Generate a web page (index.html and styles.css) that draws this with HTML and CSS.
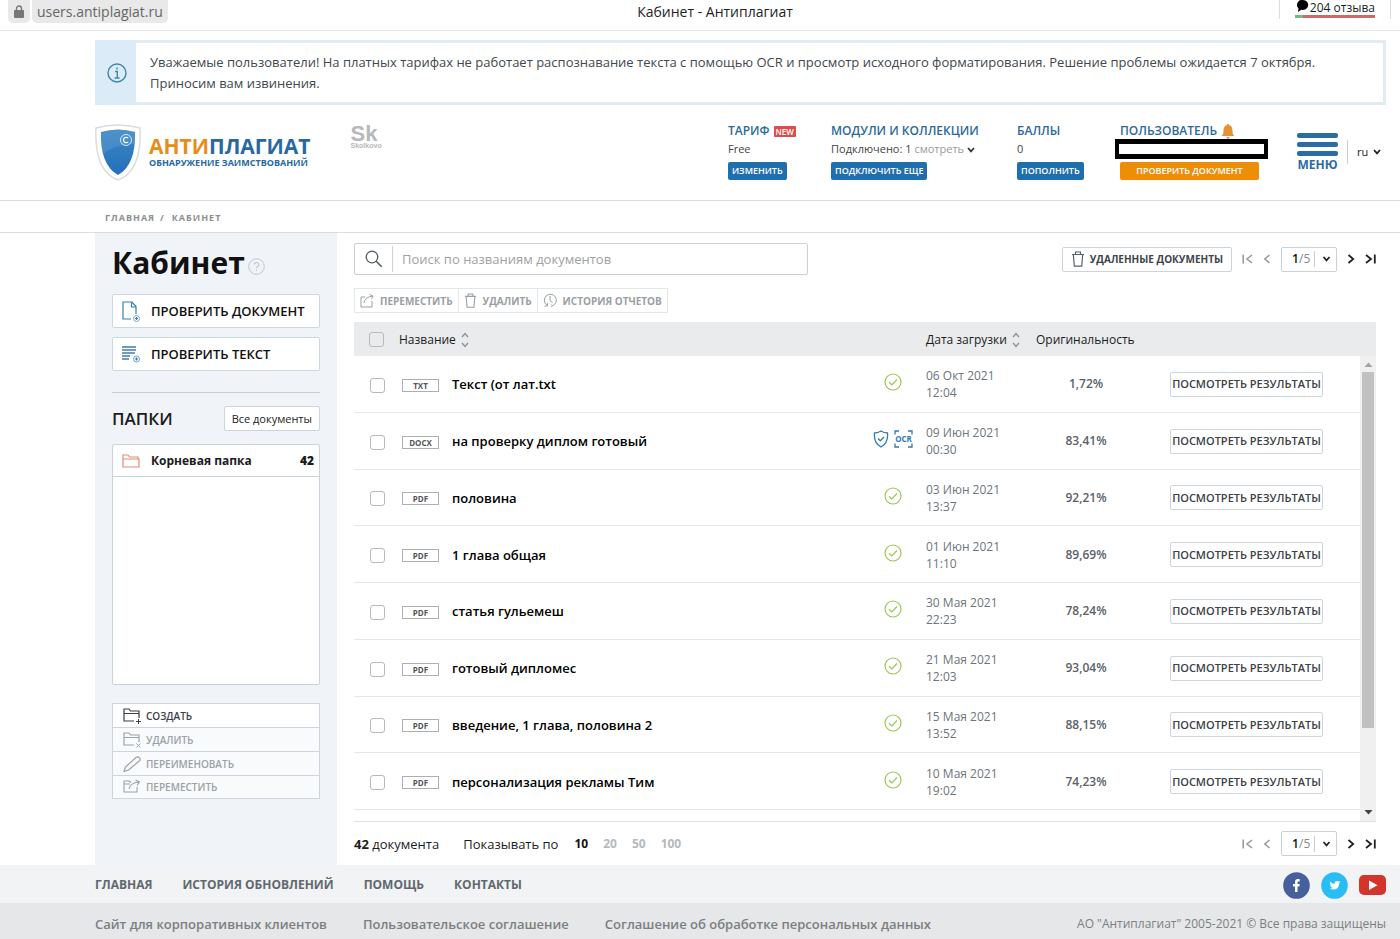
FILE: index.html
```html
<!DOCTYPE html>
<html lang="ru">
<head>
<meta charset="utf-8">
<meta name="viewport" content="width=device-width, initial-scale=1">
<title>Кабинет - Антиплагиат</title>
<link rel="stylesheet" href="styles.css">
</head>
<body>
<svg class="sprite" aria-hidden="true">
  <symbol id="chev" viewBox="0 0 8 6"><path d="M1 1l3 3.4L7 1" fill="none" stroke="currentColor" stroke-width="1.7"/></symbol>
  <symbol id="sort" viewBox="0 0 8 16"><path d="M1 5l3-3.5L7 5M1 11l3 3.5L7 11" fill="none" stroke="#8d9499" stroke-width="1.4"/></symbol>
  <symbol id="prev" viewBox="0 0 8 10"><path d="M6.5 1L1.8 5l4.700 4" fill="none" stroke="currentColor" stroke-width="1.500"/></symbol>
  <symbol id="next" viewBox="0 0 8 10"><path d="M1.500 1l4.700 4-4.700 4" fill="none" stroke="currentColor" stroke-width="1.800"/></symbol>
  <symbol id="first" viewBox="0 0 11 10"><path d="M1.200 0.500v9M10 1L5 5l5 4" fill="none" stroke="currentColor" stroke-width="1.500"/></symbol>
  <symbol id="last" viewBox="0 0 11 10"><path d="M9.800 0.500v9M1 1l5 4-5 4" fill="none" stroke="currentColor" stroke-width="1.800"/></symbol>
  <symbol id="ok" viewBox="0 0 18 18"><circle cx="9" cy="9" r="8" fill="none" stroke="#9cc653" stroke-width="1.200"/><path d="M5 9.200l2.800 2.700L13 6.500" fill="none" stroke="#9cc653" stroke-width="1.200"/></symbol>
  <symbol id="trash" viewBox="0 0 14 16"><path d="M1 3.500h12M4.500 3.300V1h5v2.300M2.300 3.500l1 11.700h7.400l1-11.700" fill="none" stroke="currentColor" stroke-width="1.200"/></symbol>
  <symbol id="folder" viewBox="0 0 20 16"><path d="M11 13H1V1h5l1.500 2H16v7M1 5.500h15" fill="none" stroke="currentColor" stroke-width="1.200"/></symbol>
</svg>

<div class="browser">
  <div class="address"><span class="lock"><svg width="10" height="13" viewBox="0 0 10 13"><path d="M2.500 6V3.500a2.500 2.500 0 0 1 5 0V6" fill="none" stroke="#777" stroke-width="1.400"/><rect y="5" width="10" height="8" rx="1" fill="#777"/></svg></span><span class="url">users.antiplagiat.ru</span></div>
  <div class="tab-title">Кабинет - Антиплагиат</div>
  <a class="reviews" href="#"><span class="reviews-text"><svg width="12" height="12" viewBox="0 0 12 12"><path d="M6 0a5.500 5 0 1 1-1.800 9.800L1 12l.5-3.600A5 5 0 0 1 6 0z"/></svg>204 отзыва</span><span class="rating"></span></a>
</div>

<div class="notice" role="status">
  <div class="notice-icon"><svg width="20" height="20" viewBox="0 0 20 20" fill="none" stroke="#3d87ab" stroke-width="1.400"><circle cx="10" cy="10" r="9"/><path d="M8 8.500h2.300V15M7.500 15h5M10 4.500v2"/></svg></div>
  <p>Уважаемые пользователи! На платных тарифах не работает распознавание текста с помощью OCR и просмотр исходного форматирования. Решение проблемы ожидается 7 октября.<br>Приносим вам извинения.</p>
</div>

<header class="header">
  <a class="logo" href="#">
    <svg width="46" height="57" viewBox="0 0 46 57"><defs><linearGradient id="sg" x1="0" y1="0" x2="0" y2="1"><stop offset="0" stop-color="#3e87c2"/><stop offset="1" stop-color="#2270bb"/></linearGradient></defs><path d="M1 4Q23-2 45 4Q47 47 23 56Q-1 47 1 4z" fill="#fff" stroke="#d7dde3" stroke-width="1.500"/><path d="M6 8Q23 3 40 8Q41 41 23 51Q5 41 6 8z" fill="url(#sg)"/><path d="M6 9Q23 3 40 8V20Q20 20 8 30Q6 22 6 9z" fill="#69a5d4" opacity=".35"/><circle cx="31" cy="16" r="5.500" fill="none" stroke="#d5e9f8"/><path d="M33.200 14.200a2.700 2.700 0 1 0 0 3.600" fill="none" stroke="#fff" stroke-width="1.200"/></svg>
    <span class="logo-text"><span class="logo-name"><span class="orange">АНТИ</span>ПЛАГИАТ</span><span class="logo-sub">ОБНАРУЖЕНИЕ ЗАИМСТВОВАНИЙ</span></span>
  </a>
  <a class="sk" href="#"><span class="sk-big">Sk</span><span class="sk-small">Skolkovo</span></a>
  <div class="account">
    <div class="acc"><span class="acc-title">ТАРИФ <span class="new">NEW</span></span><span class="acc-value">Free</span><button class="btn-blue">ИЗМЕНИТЬ</button></div>
    <div class="acc"><span class="acc-title">МОДУЛИ И КОЛЛЕКЦИИ</span><span class="acc-value">Подключено: 1 <a href="#">смотреть <svg width="8" height="6"><use href="#chev"/></svg></a></span><button class="btn-blue">ПОДКЛЮЧИТЬ ЕЩЕ</button></div>
    <div class="acc"><span class="acc-title">БАЛЛЫ</span><span class="acc-value">0</span><button class="btn-blue">ПОПОЛНИТЬ</button></div>
    <div class="acc user"><span class="acc-title">ПОЛЬЗОВАТЕЛЬ <svg width="14" height="15" viewBox="0 0 14 15"><path d="M7 0a1.200 1.200 0 0 1 1.200 1.300C11 2 11.500 4.500 11.500 7c0 3 .5 3.500 2 5H.5c1.500-1.500 2-2 2-5 0-2.500.5-5 3.300-5.700A1.200 1.200 0 0 1 7 0zM5.300 13h3.400A1.700 1.700 0 0 1 5.300 13z" fill="#e69138"/></svg></span><span class="acc-value"></span><button class="btn-orange">ПРОВЕРИТЬ ДОКУМЕНТ</button><span class="user-mask"></span></div>
  </div>
  <button class="menu"><span class="bar"></span><span class="bar"></span><span class="bar"></span>МЕНЮ</button>
  <label class="lang"><select aria-label="Язык"><option>ru</option></select><svg width="8" height="6"><use href="#chev"/></svg></label>
</header>

<nav class="crumbs"><a href="#">ГЛАВНАЯ</a><span>/</span><a href="#">КАБИНЕТ</a></nav>

<div class="page">
  <aside class="side">
    <h1>Кабинет<svg width="17" height="17" viewBox="0 0 17 17" fill="none" stroke="#c0c6ca"><circle cx="8.500" cy="8.500" r="7.800"/><path d="M6.200 6.600a2.300 2.100 0 1 1 3.300 1.900q-1 .5-1 1.700M8.500 11.700v1.300" stroke-width="1.200"/></svg></h1>
    <button class="check"><svg width="19" height="21" viewBox="0 0 19 21" fill="none" stroke="#3b7fae" stroke-width="1.200"><path d="M9 18H1V1h9l4 4.500V13M9.500 1v5H14"/><circle cx="14.500" cy="17.500" r="3" stroke="#72a3c5" stroke-width="1"/><path d="M14.500 16v3M13 17.500h3"/></svg>ПРОВЕРИТЬ ДОКУМЕНТ</button>
    <button class="check"><svg width="19" height="18" viewBox="0 0 19 18" fill="none" stroke="#3b7fae" stroke-width="1.500"><path d="M0 2h14M0 5h14M0 8h13M0 11h8M0 14h7"/><circle cx="14.500" cy="14" r="3" stroke="#72a3c5" stroke-width="1"/><path d="M14.500 12.500v3M13 14h3" stroke-width="1.200"/></svg>ПРОВЕРИТЬ ТЕКСТ</button>
    <div class="folders-head"><h2>ПАПКИ</h2><button class="all">Все документы</button></div>
    <div class="tree"><a class="tree-row" href="#"><svg width="18" height="14" viewBox="0 0 18 14"><path d="M1 13V1h5l1.500 2H16v2M1 13V5h16v8z" fill="none" stroke="#e48b70" stroke-width="1.200"/></svg><span>Корневая папка</span><b>42</b></a></div>
    <div class="folder-actions">
      <button><svg width="20" height="16"><use href="#folder"/><path d="M13 13.500h5M15.500 11v5" stroke="currentColor"/></svg>СОЗДАТЬ</button>
      <button disabled><svg width="20" height="16"><use href="#folder"/><path d="M13.500 11.500l4 4M17.500 11.500l-4 4" stroke="currentColor"/></svg>УДАЛИТЬ</button>
      <button disabled><svg width="20" height="16" viewBox="0 0 20 16"><path d="M1 15.500l1.500-4.500L13 1.500q2-1.500 3.500.3t0 3L5.500 14z" fill="none" stroke="currentColor" stroke-width="1.200"/></svg>ПЕРЕИМЕНОВАТЬ</button>
      <button disabled><svg width="20" height="16" viewBox="0 0 20 16"><path d="M8 3.500L6.500 2H1v11h13V8M1 5h6M6 10q1-6 10-7M12.500 1l4 2-2.500 3.500" fill="none" stroke="currentColor" stroke-width="1.100"/></svg>ПЕРЕМЕСТИТЬ</button>
    </div>
  </aside>

  <main class="main">
    <div class="top">
      <label class="search"><svg width="18" height="18" viewBox="0 0 18 18" fill="none" stroke="#545c62" stroke-width="1.300"><circle cx="7" cy="7" r="5.800"/><path d="M11.200 11.200l5.500 5.500" stroke-width="1.600"/></svg><input type="text" aria-label="Поиск" placeholder="Поиск по названиям документов"></label>
      <button class="deleted"><svg width="14" height="16"><use href="#trash"/></svg>УДАЛЕННЫЕ ДОКУМЕНТЫ</button>
      <div class="pager">
        <button disabled aria-label="Первая"><svg width="11" height="10"><use href="#first"/></svg></button><button disabled aria-label="Назад"><svg width="8" height="10"><use href="#prev"/></svg></button>
        <label class="page-box"><select aria-label="Страница"><option>1</option></select><span>/5</span><svg width="8" height="6"><use href="#chev"/></svg></label>
        <button aria-label="Вперед"><svg width="8" height="10"><use href="#next"/></svg></button><button aria-label="Последняя"><svg width="11" height="10"><use href="#last"/></svg></button>
      </div>
    </div>
    <div class="tools">
      <button disabled><svg width="14" height="14" viewBox="0 0 14 14"><path d="M5 3H1v10h11V7M4 9q.5-6 9-7M9.500.5l3.500 1.500L11.500 5" fill="none" stroke="currentColor"/></svg>ПЕРЕМЕСТИТЬ</button>
      <button disabled><svg width="13" height="15"><use href="#trash"/></svg>УДАЛИТЬ</button>
      <button disabled><svg width="14" height="15" viewBox="0 0 14 15"><path d="M4 12.200A6 6 0 1 1 9.500 12.800M1.500 13h3v-3M7 3v4.500l2.500 2M8.500 11.500l1 1.300-1.300 1" fill="none" stroke="currentColor"/></svg>ИСТОРИЯ ОТЧЕТОВ</button>
    </div>

    <div class="list">
      <table class="docs">
        <colgroup><col class="c-check"><col class="c-type"><col><col class="c-status"><col class="c-date"><col class="c-orig"><col class="c-act"><col class="c-scroll"></colgroup>
        <thead><tr><th><input type="checkbox" aria-label="Выбрать все"></th><th colspan="3" class="h-name">Название <svg width="8" height="16"><use href="#sort"/></svg></th><th>Дата загрузки <svg width="8" height="16"><use href="#sort"/></svg></th><th>Оригинальность</th><th></th><th></th></tr></thead>
        <tbody>
          <tr><td><input type="checkbox" aria-label="Выбрать"></td><td><span class="type">TXT</span></td><td class="name">Текст (от лат.txt</td><td class="status"><svg width="18" height="18"><use href="#ok"/></svg></td><td class="date">06 Окт 2021<br>12:04</td><td class="orig">1,72%</td><td><button class="view">ПОСМОТРЕТЬ РЕЗУЛЬТАТЫ</button></td><td></td></tr>
          <tr><td><input type="checkbox" aria-label="Выбрать"></td><td><span class="type">DOCX</span></td><td class="name">на проверку диплом готовый</td><td class="status"><svg width="40" height="18" viewBox="0 0 40 18" fill="none" stroke="#2f7bae" stroke-width="1.300"><path d="M8 1q3 2 6.500 2 1 10-6.500 14Q.5 13 1.500 3 5 3 8 1zM5 8.500l2.300 2.300L11 7"/><path d="M22 4.500V1h4M35 1h4v3.500M22 13.500V17h4M35 17h4v-3.500"/><text x="30.500" y="12" text-anchor="middle" class="ocr">OCR</text></svg></td><td class="date">09 Июн 2021<br>00:30</td><td class="orig">83,41%</td><td><button class="view">ПОСМОТРЕТЬ РЕЗУЛЬТАТЫ</button></td><td></td></tr>
          <tr><td><input type="checkbox" aria-label="Выбрать"></td><td><span class="type">PDF</span></td><td class="name">половина</td><td class="status"><svg width="18" height="18"><use href="#ok"/></svg></td><td class="date">03 Июн 2021<br>13:37</td><td class="orig">92,21%</td><td><button class="view">ПОСМОТРЕТЬ РЕЗУЛЬТАТЫ</button></td><td></td></tr>
          <tr><td><input type="checkbox" aria-label="Выбрать"></td><td><span class="type">PDF</span></td><td class="name">1 глава общая</td><td class="status"><svg width="18" height="18"><use href="#ok"/></svg></td><td class="date">01 Июн 2021<br>11:10</td><td class="orig">89,69%</td><td><button class="view">ПОСМОТРЕТЬ РЕЗУЛЬТАТЫ</button></td><td></td></tr>
          <tr><td><input type="checkbox" aria-label="Выбрать"></td><td><span class="type">PDF</span></td><td class="name">статья гульемеш</td><td class="status"><svg width="18" height="18"><use href="#ok"/></svg></td><td class="date">30 Мая 2021<br>22:23</td><td class="orig">78,24%</td><td><button class="view">ПОСМОТРЕТЬ РЕЗУЛЬТАТЫ</button></td><td></td></tr>
          <tr><td><input type="checkbox" aria-label="Выбрать"></td><td><span class="type">PDF</span></td><td class="name">готовый дипломес</td><td class="status"><svg width="18" height="18"><use href="#ok"/></svg></td><td class="date">21 Мая 2021<br>12:03</td><td class="orig">93,04%</td><td><button class="view">ПОСМОТРЕТЬ РЕЗУЛЬТАТЫ</button></td><td></td></tr>
          <tr><td><input type="checkbox" aria-label="Выбрать"></td><td><span class="type">PDF</span></td><td class="name">введение, 1 глава, половина 2</td><td class="status"><svg width="18" height="18"><use href="#ok"/></svg></td><td class="date">15 Мая 2021<br>13:52</td><td class="orig">88,15%</td><td><button class="view">ПОСМОТРЕТЬ РЕЗУЛЬТАТЫ</button></td><td></td></tr>
          <tr><td><input type="checkbox" aria-label="Выбрать"></td><td><span class="type">PDF</span></td><td class="name">персонализация рекламы Тим</td><td class="status"><svg width="18" height="18"><use href="#ok"/></svg></td><td class="date">10 Мая 2021<br>19:02</td><td class="orig">74,23%</td><td><button class="view">ПОСМОТРЕТЬ РЕЗУЛЬТАТЫ</button></td><td></td></tr>
        </tbody>
      </table>
      <div class="scroll" aria-hidden="true"><svg width="16" height="16"><path d="M4.500 11L8.500 6.500l4 4.500z" fill="#a3a3a3"/></svg><span class="thumb"></span><svg width="16" height="16"><path d="M4.500 5h8l-4 4.500z" fill="#444"/></svg></div>
    </div>

    <div class="bottom">
      <span><b>42</b> документа</span><span class="show">Показывать по</span>
      <a class="size current" href="#">10</a><a class="size" href="#">20</a><a class="size" href="#">50</a><a class="size" href="#">100</a>
      <div class="pager">
        <button disabled aria-label="Первая"><svg width="11" height="10"><use href="#first"/></svg></button><button disabled aria-label="Назад"><svg width="8" height="10"><use href="#prev"/></svg></button>
        <label class="page-box"><select aria-label="Страница"><option>1</option></select><span>/5</span><svg width="8" height="6"><use href="#chev"/></svg></label>
        <button aria-label="Вперед"><svg width="8" height="10"><use href="#next"/></svg></button><button aria-label="Последняя"><svg width="11" height="10"><use href="#last"/></svg></button>
      </div>
    </div>
  </main>
</div>

<footer>
  <div class="foot-nav">
    <a href="#">ГЛАВНАЯ</a><a href="#">ИСТОРИЯ ОБНОВЛЕНИЙ</a><a href="#">ПОМОЩЬ</a><a href="#">КОНТАКТЫ</a>
    <div class="social">
      <a href="#" aria-label="Facebook"><svg width="27" height="27" viewBox="0 0 27 27"><circle cx="13.500" cy="13.500" r="13.300" fill="#45609c"/><path d="M12 20v-5.500h-2V12h2v-2q0-3 3-3h1.700v2.500h-1.200q-1 0-1 1V12h2.200l-.3 2.500h-1.900V20z" fill="#fff"/></svg></a>
      <a href="#" aria-label="Twitter"><svg width="27" height="27" viewBox="0 0 27 27"><circle cx="13.500" cy="13.500" r="13.300" fill="#28bdf5"/><path d="M9 9.500q2 2.300 4.600 2.400-.3-3 2.300-3 1 0 1.600.7l1.500-.6-.8 1.400 1-.2-1 1.200q-.2 6-6 6.200-2 0-3.500-1 1.800 0 2.800-.9-1.500-.2-1.900-1.500h.8q-1.500-.7-1.600-2l.8.200Q8.400 11 9 9.500z" fill="#fff"/></svg></a>
      <a href="#" aria-label="YouTube"><svg width="27" height="20" viewBox="0 0 27 20"><rect width="27" height="20" rx="5" fill="#d3342c"/><path d="M10 5.500v9.500l8.500-4.750z" fill="#fff"/></svg></a>
    </div>
  </div>
  <div class="legal"><a href="#">Сайт для корпоративных клиентов</a><a href="#">Пользовательское соглашение</a><a href="#">Соглашение об обработке персональных данных</a><span>АО "Антиплагиат" 2005-2021 © Все права защищены</span></div>
</footer>
</body>
</html>
```
FILE: styles.css
```css
* { box-sizing: border-box; }
body { margin: 0; min-height: 100vh; display: flex; flex-direction: column; background: #fff; color: #1c1c1c; font: 13px/18px "Open Sans", sans-serif; }
a { color: inherit; text-decoration: none; }
button, input, select { font: inherit; color: inherit; }
button { cursor: pointer; padding: 0; border: 0; background: none; white-space: nowrap; }
svg { flex: none; }
.sprite { position: absolute; width: 0; height: 0; }

.browser { display: grid; grid-template-columns: 1fr auto 1fr; height: 31px; padding: 0 9px 0 8px; border-bottom: 1px solid #e2e6e8; }
.address { display: flex; gap: 2px; height: 23px; font-size: 14px; line-height: 23px; color: #666; }
.lock { width: 22px; padding-top: 1px; text-align: center; background: #e9e9e9; border-radius: 0 0 5px 5px; }
.url { padding: 0 5px; background: #e9e9e9; border-radius: 0 0 5px 5px; }
.tab-title { padding-left: 31px; font-size: 14px; line-height: 24px; color: #222; }
.reviews { justify-self: end; height: 19px; padding: 0 15px; border: solid #ddd; border-width: 0 1px; font-size: 12px; line-height: 15px; }
.reviews-text { display: flex; gap: 1px; padding-left: 2px; }
.rating { display: block; height: 3px; background: linear-gradient(90deg, #76b986 10%, #cc6a65 10%); }

.notice { display: flex; margin: 9px 14px 0 95px; border: 3px solid #e0ebf2; border-left: 0; }
.notice-icon { display: flex; align-items: center; justify-content: center; width: 41px; margin: -3px 0; padding-left: 2px; background: #dbebf8; flex: none; }
.notice p { margin: 0; padding: 9px 14px 8px; font-size: 13px; line-height: 21px; color: #41484e; }

.header { display: flex; height: 96px; padding: 19px 19px 0 95px; border-bottom: 1px solid #dcdfe1; }
.logo { display: flex; gap: 8px; }
.logo-text { display: flex; flex-direction: column; padding-top: 12px; color: #2668a2; font-weight: 700; }
.logo-name { font-size: 21px; line-height: 21px; }
.logo-sub { font-size: 9px; line-height: 11px; }
.orange { color: #e58e1a; }
.sk { display: flex; flex-direction: column; margin-left: 40px; color: #b6b8ba; font-family: "Liberation Sans", sans-serif; font-weight: 700; }
.sk-big { font-size: 22px; line-height: 19px; }
.sk-small { font-size: 7px; line-height: 6px; }
.account { display: grid; grid-template-columns: 103px 186px 103px 139px; margin-left: auto; line-height: 18px; height: 58px; }
.acc { display: flex; flex-direction: column; align-items: flex-start; position: relative; }
.acc-title { display: flex; align-items: center; gap: 4px; height: 14px; font-size: 12px; font-weight: 600; color: #2c699c; white-space: nowrap; }
.new { padding: 0 2px; background: #dc4d4d; color: #fff; font-size: 8px; line-height: 11px; border-radius: 1px; }
.acc-value { height: 24px; line-height: 22px; font-size: 11px; color: #444; }
.acc-value a { color: #999; }
.acc-value svg { color: #333; }
.btn-blue, .btn-orange { height: 18px; padding: 0 4px; border-radius: 2px; background: #1f6eae; color: #fff; font-size: 9px; font-weight: 600; }
.btn-orange { width: 139px; background: #ee8d08; }
.user-mask { position: absolute; left: -5px; top: 15px; width: 153px; height: 20px; border: solid #000; border-width: 5px 4px; background: #fff; }
.menu { display: flex; flex-direction: column; gap: 4px; width: 41px; height: 42px; margin: 9px 9px 0 38px; color: #2b6ca5; font-size: 12px; font-weight: 700; line-height: 10px; }
.bar { width: 41px; height: 5px; border-radius: 2px; background: #2b6ca5; flex: none; }
.lang { display: flex; align-items: center; gap: 4px; height: 24px; margin-top: 16px; padding-left: 9px; border-left: 1px solid #ccc; font-size: 11px; }
select { appearance: none; border: 0; padding: 0; background: none; }

.crumbs { display: flex; gap: 5px; padding: 7px 105px; border-bottom: 1px solid #dcdfe1; font-size: 9px; font-weight: 700; letter-spacing: 1px; line-height: 20px; height: 32px; color: #8b8f92; }
.crumbs span { margin-right: 2px; }

.page { display: flex; flex: 1; padding: 0 24px 0 95px; }
.side { width: 242px; flex: none; padding: 12px 17px 20px; background: #f0f4f8; }
h1 { display: flex; align-items: center; gap: 3px; margin: 0 0 13px; font-size: 30px; line-height: 36px; color: #111; }
h1 svg { margin-top: 6px; }
.check { display: flex; align-items: center; gap: 10px; width: 100%; height: 34px; margin-bottom: 9px; padding: 0 9px; border: 1px solid #ccd8e0; border-radius: 2px; background: #fff; font-size: 13px; font-weight: 600; color: #111; }
.folders-head { display: flex; align-items: center; justify-content: space-between; margin: 21px 0 13px; padding-top: 13px; border-top: 1px solid #c8d0d6; }
h2 { margin: 0; font-size: 17px; font-weight: 600; line-height: 24px; }
.all { height: 25px; padding: 0 7px; border: 1px solid #ccd5db; border-radius: 2px; background: #fff; font-size: 11px; }
.tree { height: 241px; border: 1px solid #c8d2d8; border-radius: 2px; background: #fff; }
.tree-row { display: flex; align-items: center; height: 32px; padding: 0 5px 0 9px; border-bottom: 1px solid #c8d2d8; font-size: 12px; font-weight: 700; }
.tree-row span { margin-left: 11px; flex: 1; }
.folder-actions { margin-top: 18px; border: 1px solid #ccd5db; }
.folder-actions button { display: flex; align-items: center; gap: 3px; width: 100%; height: 24px; padding: 0 10px; border-bottom: 1px solid #ccd5db; background: #fff; color: #3a4045; font-size: 10px; font-weight: 600; }
.folder-actions button:disabled { background: #f8fafc; color: #9ba2a7; }
.folder-actions button:last-child { border-bottom: 0; height: 22px; }

.main { display: flex; flex-direction: column; flex: 1; min-width: 0; padding: 9px 0 0 17px; }
.top { display: flex; align-items: center; height: 34px; }
.search { display: flex; align-items: center; width: 454px; height: 32px; padding-left: 10px; border: 1px solid #c9d1d6; border-radius: 2px; }
.search input { flex: 1; height: 26px; margin-left: 9px; padding: 0 9px; border: 0; border-left: 1px solid #ccd3d7; outline: 0; font-size: 13px; }
.search input::placeholder { color: #9da2a5; }
.deleted { display: flex; align-items: center; gap: 5px; height: 25px; margin-left: auto; padding: 0 8px; border: 1px solid #ccd4d9; border-radius: 2px; font-size: 10px; font-weight: 700; color: #3d454b; }
.deleted svg { color: #59626a; }
.pager { display: flex; align-items: center; gap: 10px; margin-left: 10px; }
.pager button { display: flex; color: #222; }
.pager button:disabled { color: #92989c; }
.page-box { display: flex; align-items: center; height: 25px; width: 56px; padding-left: 10px; border: 1px solid #c9d1d6; border-radius: 2px; font-size: 12px; color: #888; }
.page-box select { color: #111; font-weight: 600; }
.page-box svg { width: 18px; height: 16px; padding: 5px 0 5px 6px; margin-left: 4px; border-left: 1px solid #ccc; color: #222; }

.tools { display: flex; align-self: flex-start; height: 25px; margin: 12px 0 9px; border: 1px solid #e2e7ea; }
.tools button { display: flex; align-items: center; gap: 6px; padding: 0 5px; border-right: 1px solid #e2e7ea; color: #9aa0a4; font-size: 10px; font-weight: 700; }
.tools button:last-child { border-right: 0; }

.list { position: relative; padding-bottom: 11px; border-bottom: 1px solid #dfe2e4; }
.docs { width: 100%; height: 488px; table-layout: fixed; border-collapse: separate; border-spacing: 0; }
.c-check { width: 45px; } .c-type { width: 53px; } .c-status { width: 54px; } .c-date { width: 110px; } .c-orig { width: 134px; } .c-act { width: 190px; } .c-scroll { width: 16px; }
.docs thead tr { height: 34px; }
.docs th { height: 34px; padding: 1px 0 0; background: #e9ebec; font-size: 12px; font-weight: 400; text-align: left; }
.docs th svg { vertical-align: middle; margin-left: 2px; }
.docs td { padding: 1px 0 0; border-bottom: 1px solid #e4e7e9; }
.docs td:last-child { border: 0; }
input[type=checkbox] { display: block; appearance: none; width: 15px; height: 15px; margin: 0 0 0 15px; border: 1px solid #b4babe; border-radius: 3px; }
td input[type=checkbox] { margin: 2px 0 0 16px; }
.type { display: block; width: 37px; height: 13px; margin: 2px 0 0 3px; border: 1px solid #a9afb3; font-size: 8px; line-height: 11px; text-align: center; font-weight: 700; color: #555; }
.name { font-size: 13px; font-weight: 600; color: #000; }
.status { text-align: right; }
.status svg { display: block; margin: 0 13px 4px auto; }
.status svg[width="18"] { margin-right: 24px; }
.ocr { font: 700 8px "Open Sans", sans-serif; fill: #2f7bae; stroke: none; }
.docs .date { font-size: 12px; line-height: 17px; color: #6c757b; }
.docs .orig { padding-right: 34px; text-align: center; font-size: 12px; font-weight: 600; color: #596269; }
.view { display: block; height: 25px; width: 153px; border: 1px solid #ccd6dc; border-radius: 2px; font-size: 11px; font-weight: 600; color: #3a4147; }
.scroll { position: absolute; right: 0; top: 34px; bottom: 0; width: 16px; display: flex; flex-direction: column; background: #f0f0f0; }
.thumb { width: 12px; margin: 0 auto 77px; flex: 1; background: #c1c1c1; }

.bottom { display: flex; align-items: center; height: 43px; font-size: 13px; }
.show { margin: 0 16px 0 24px; }
.size { margin-right: 15px; font-size: 12px; font-weight: 700; color: #b5b9bb; }
.size.current { color: #111; }
.bottom .pager { margin-left: auto; }

.foot-nav { display: flex; align-items: center; gap: 30px; height: 38px; padding: 2px 14px 0 95px; background: #f1f3f4; color: #5f686e; font-size: 12px; font-weight: 700; }
.foot-nav a { line-height: 20px; }
.social { display: flex; align-items: center; gap: 11px; margin-left: auto; }
.social a { display: flex; }
.legal { display: flex; align-items: center; gap: 36px; height: 36px; padding: 5px 14px 0 95px; background: #e5e7e8; color: #7b7f82; font-size: 13px; font-weight: 600; }
.legal span { margin-left: auto; font-size: 12px; font-weight: 400; }
```
